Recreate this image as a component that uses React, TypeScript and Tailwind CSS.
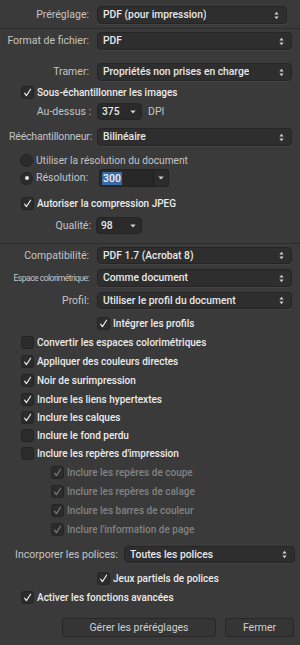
import React from "react";

const Arrows = () => (
  <svg width="5" height="9" viewBox="0 0 5 9" className="shrink-0">
    <path d="M2.5 0.8 L4.6 3.4 L0.4 3.4Z M0.4 5.6 L4.6 5.6 L2.5 8.2Z" fill="#cfcfcf" />
  </svg>
);

const Down = () => (
  <svg width="6" height="4" viewBox="0 0 6 4" className="shrink-0">
    <path d="M0.3 0.5 L5.7 0.5 L3 3.6Z" fill="#d0d0d0" />
  </svg>
);

function Select({ value, w, cls = "" }: { value: string; w: string; cls?: string }) {
  return (
    <div
      className={`${w} ${cls} flex items-center justify-between rounded-[4px] border border-[#252525] bg-[#2e2e2e] pl-[5px] pr-[7px] text-[#e8e8e8] text-[10.3px] font-medium shadow-[0_1px_0_#444]`}
    >
      <span className="truncate">{value}</span>
      <Arrows />
    </div>
  );
}

function SmallSelect({ value, w }: { value: string; w: string }) {
  return (
    <div
      className={`${w} h-[17px] flex items-center justify-between rounded-[4px] border border-[#252525] bg-[#2a2a2a] pl-[4px] pr-[5px] text-[#e8e8e8] text-[10.3px] font-medium`}
    >
      <span>{value}</span>
      <Down />
    </div>
  );
}

function CB({ checked, disabled }: { checked?: boolean; disabled?: boolean }) {
  return (
    <div className="w-[13px] h-[13px] shrink-0 rounded-[3px] border border-[#242424] bg-[#2c2c2c] flex items-center justify-center">
      {checked && (
        <svg width="9" height="9" viewBox="0 0 9 9">
          <path
            d="M1.6 5.2 L3.4 7.6 L7.6 1.2"
            stroke={disabled ? "#7d7d7d" : "#f2f2f2"}
            strokeWidth="1.1"
            fill="none"
            strokeLinecap="round"
            strokeLinejoin="round"
          />
        </svg>
      )}
    </div>
  );
}

function CheckRow({
  label,
  checked,
  disabled,
  pl,
  mt,
}: {
  label: string;
  checked?: boolean;
  disabled?: boolean;
  pl: string;
  mt: string;
}) {
  return (
    <div className={`${pl} ${mt} h-[13px] flex items-center gap-[3px]`}>
      <CB checked={checked} disabled={disabled} />
      <span
        className={`text-[10px] font-medium whitespace-nowrap ${
          disabled ? "text-[#828282]" : "text-[#ececec]"
        }`}
      >
        {label}
      </span>
    </div>
  );
}

function LabelRow({
  label,
  value,
  mt,
  h,
  lw = "w-[89px]",
  sw = "w-[195px]",
  lcls = "text-[10.5px]",
}: {
  label: string;
  value: string;
  mt: string;
  h: string;
  lw?: string;
  sw?: string;
  lcls?: string;
}) {
  return (
    <div className={`${mt} ${h} flex items-center gap-[8px]`}>
      <div className={`${lw} text-right text-[#c4c4c4] whitespace-nowrap ${lcls}`}>{label}</div>
      <Select value={value} w={sw} cls={h} />
    </div>
  );
}

export default function App() {
  return (
    <div className="w-[300px] h-[645px] bg-[#3a3a3a] overflow-hidden font-[family-name:Roboto,'Liberation_Sans',sans-serif] select-none">
      <div className="flex flex-col pt-[6px]">
        <LabelRow label="Préréglage:" value="PDF (pour impression)" mt="mt-0" h="h-[18px]" sw="w-[190px]" />
        <div className="mt-[4px] h-px bg-[#2c2c2c]" />
        <LabelRow label="Format de fichier:" value="PDF" mt="mt-[3px]" h="h-[18px]" />
        <LabelRow label="Tramer:" value="Propriétés non prises en charge" mt="mt-[13px]" h="h-[18px]" />
        <CheckRow label="Sous-échantillonner les images" checked pl="pl-[21px]" mt="mt-[5px]" />
        <div className="mt-[4px] h-[17px] flex items-center">
          <div className="w-[91px] text-right text-[#c4c4c4] text-[10.5px]">Au-dessus :</div>
          <div className="ml-[6px]">
            <SmallSelect value="375" w="w-[45px]" />
          </div>
          <span className="ml-[6px] text-[#c4c4c4] text-[10.5px]">DPI</span>
        </div>
        <div className="mt-[8px] h-[18px] flex items-center gap-[5px]">
          <div className="w-[92px] text-right text-[#c4c4c4] text-[10.5px] whitespace-nowrap tracking-[-0.2px]">
            Rééchantillonneur:
          </div>
          <Select value="Bilinéaire" w="w-[195px]" cls="h-[18px]" />
        </div>
        <div className="mt-[8px] h-[13px] pl-[20px] flex items-center gap-[3px]">
          <div className="w-[13px] h-[13px] rounded-full border border-[#242424] bg-[#2c2c2c]" />
          <span className="text-[#c4c4c4] text-[10.2px]">Utiliser la résolution du document</span>
        </div>
        <div className="mt-[2px] h-[18px] pl-[20px] flex items-center">
          <div className="w-[13px] h-[13px] rounded-full border border-[#242424] bg-[#2c2c2c] flex items-center justify-center">
            <div className="w-[4px] h-[4px] rounded-full bg-[#e8e8e8]" />
          </div>
          <span className="ml-[3px] w-[63px] text-[#c4c4c4] text-[10.5px]">Résolution:</span>
          <div className="w-[70px] h-[18px] flex rounded-[3px] border border-[#222] bg-[#272727]">
            <div className="flex-1 flex items-center pl-[2px]">
              <span className="bg-[#3a6aa6] text-[#f0f0f0] text-[10.5px] font-medium px-[1px] leading-[13px]">300</span>
            </div>
            <div className="w-[15px] border-l border-[#1f1f1f] flex items-center justify-center bg-[#2c2c2c] rounded-r-[3px]">
              <Down />
            </div>
          </div>
        </div>
        <CheckRow label="Autoriser la compression JPEG" checked pl="pl-[21px]" mt="mt-[10px]" />
        <div className="mt-[7px] h-[17px] flex items-center">
          <div className="w-[91px] text-right text-[#c4c4c4] text-[10.5px]">Qualité:</div>
          <div className="ml-[5px]">
            <SmallSelect value="98" w="w-[46px]" />
          </div>
        </div>
        <div className="mt-[9px] h-px bg-[#2c2c2c]" />
        <LabelRow label="Compatibilité:" value="PDF 1.7 (Acrobat 8)" mt="mt-[3px]" h="h-[17px]" />
        <LabelRow
          label="Espace colorimétrique:"
          value="Comme document"
          mt="mt-[5px]"
          h="h-[18px]"
          lw="w-[89px]"
          lcls="text-[8.6px] tracking-[-0.55px]"
        />
        <LabelRow label="Profil:" value="Utiliser le profil du document" mt="mt-[5px]" h="h-[17px]" />
        <CheckRow label="Intégrer les profils" checked pl="pl-[97px]" mt="mt-[8px]" />
        <CheckRow label="Convertir les espaces colorimétriques" pl="pl-[21px]" mt="mt-[6px]" />
        <CheckRow label="Appliquer des couleurs directes" checked pl="pl-[21px]" mt="mt-[6px]" />
        <CheckRow label="Noir de surimpression" checked pl="pl-[21px]" mt="mt-[6px]" />
        <CheckRow label="Inclure les liens hypertextes" checked pl="pl-[21px]" mt="mt-[6px]" />
        <CheckRow label="Inclure les calques" checked pl="pl-[21px]" mt="mt-[5px]" />
        <CheckRow label="Inclure le fond perdu" pl="pl-[21px]" mt="mt-[5px]" />
        <CheckRow label="Inclure les repères d'impression" pl="pl-[21px]" mt="mt-[5px]" />
        <CheckRow label="Inclure les repères de coupe" checked disabled pl="pl-[51px]" mt="mt-[6px]" />
        <CheckRow label="Inclure les repères de calage" checked disabled pl="pl-[51px]" mt="mt-[6px]" />
        <CheckRow label="Inclure les barres de couleur" checked disabled pl="pl-[51px]" mt="mt-[6px]" />
        <CheckRow label="Inclure l'information de page" checked disabled pl="pl-[51px]" mt="mt-[6px]" />
        <div className="mt-[10px] h-[17px] flex items-center gap-[6px]">
          <div className="w-[118px] text-right text-[#c4c4c4] text-[10.5px] whitespace-nowrap">Incorporer les polices:</div>
          <Select value="Toutes les polices" w="w-[171px]" cls="h-[17px]" />
        </div>
        <CheckRow label="Jeux partiels de polices" checked pl="pl-[97px]" mt="mt-[9px]" />
        <CheckRow label="Activer les fonctions avancées" checked pl="pl-[21px]" mt="mt-[6px]" />
        <div className="mt-[14px] h-[19px] flex justify-end gap-[9px] pr-[6px]">
          <button className="w-[154px] h-[19px] rounded-[3px] border border-[#272727] bg-[#353535] text-[#cfcfcf] text-[10.5px]">
            Gérer les préréglages
          </button>
          <button className="w-[69px] h-[19px] rounded-[3px] border border-[#272727] bg-[#353535] text-[#cfcfcf] text-[10.5px]">
            Fermer
          </button>
        </div>
      </div>
    </div>
  );
}
